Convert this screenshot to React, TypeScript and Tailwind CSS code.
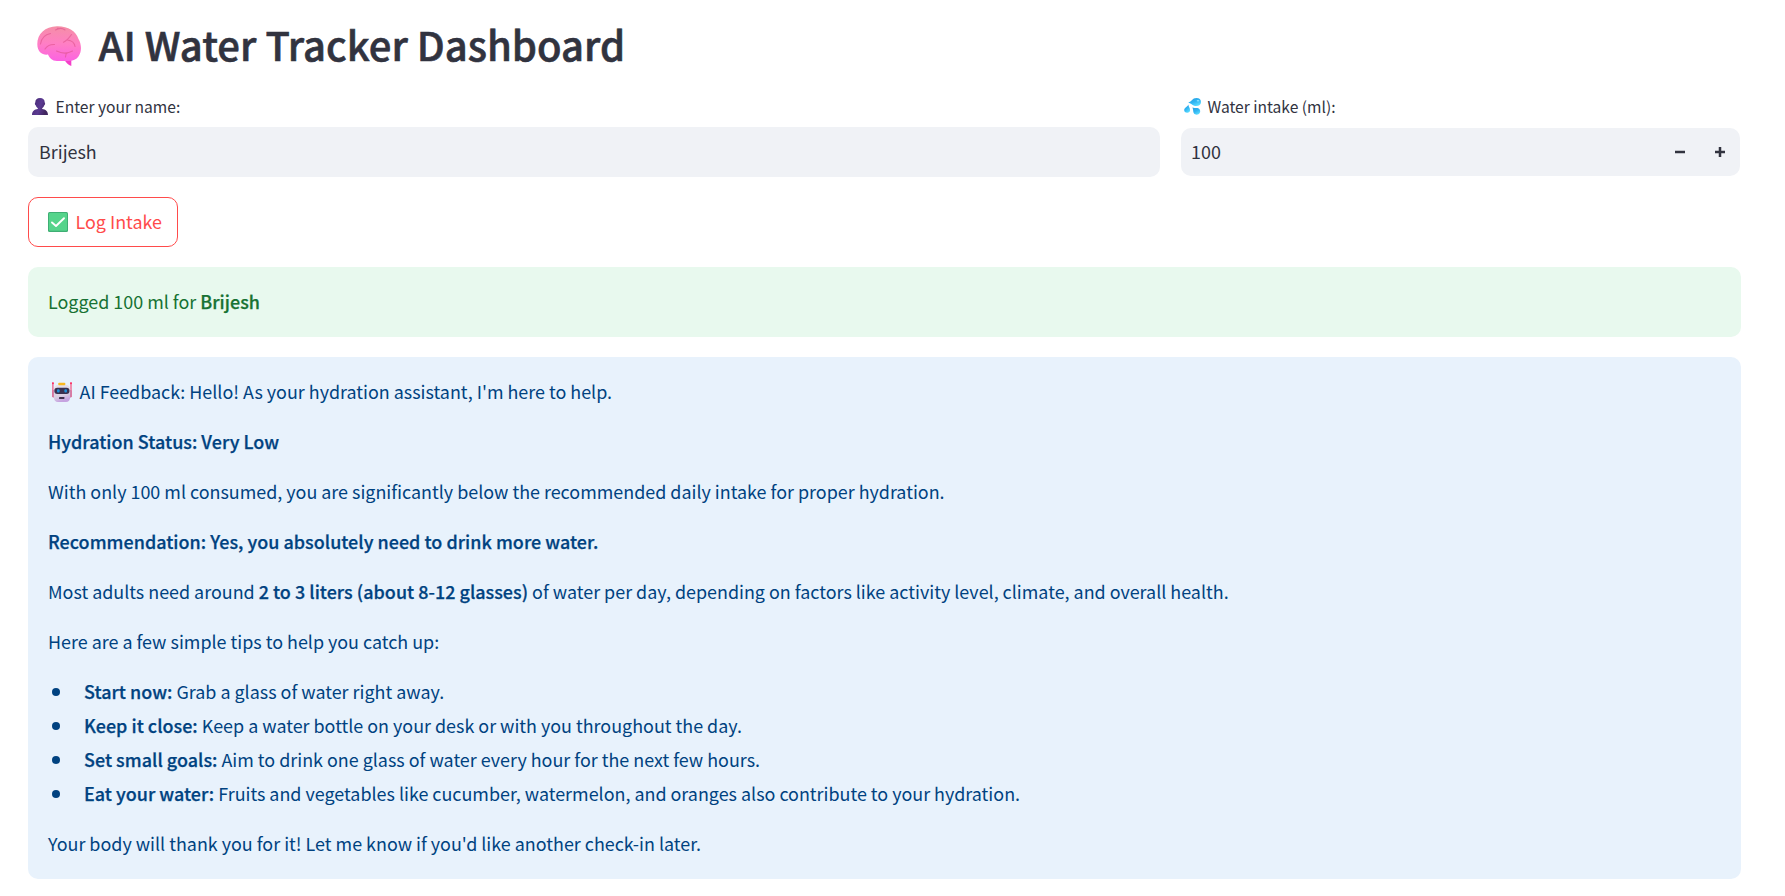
import type { ReactNode } from "react";

const BrainIcon = () => (
  <svg className="block h-10 w-11 shrink-0" viewBox="0 0 44 40" fill="none">
    <defs>
      <linearGradient id="brain" x1="0.5" y1="0" x2="0.45" y2="1">
        <stop offset="0" stopColor="#f58fa6" />
        <stop offset="0.5" stopColor="#ff7fc4" />
        <stop offset="1" stopColor="#fc62e2" />
      </linearGradient>
    </defs>
    <path d="M27 33 L34.3 34 V40 C31 38.8 29 37 27 33Z" fill="#f43fc8" />
    <path
      d="M0.3 18 C0.3 8 8 0.3 20 0.2 C31 0 39 5 41.5 13 C44.5 18 45 25 41.8 30 C39.5 34 35 35 30 35 H20 C15 35 12.5 32 11 28.5 C6 29.3 0.3 26.5 0.3 18Z"
      fill="url(#brain)"
    />
    <g stroke="#e0558f" strokeOpacity="0.65" strokeWidth="1.1" strokeLinecap="round">
      <path d="M3.5 18 C4.5 12 7.5 8.5 13.5 7.5" />
      <path d="M8 23 C10.5 19 13.5 18.3 17.5 18.5" />
      <path d="M18.5 4 C22 1.8 25 1.8 28 4 M22.5 2.6 L20.5 2.2" />
      <path d="M34.5 8.5 C31.5 12.8 30 14.5 26.5 16.2 M30.5 14 C35 14.5 37.5 17 38 20.5" />
      <path d="M19.5 25 C25 27.7 31 27.5 35.5 25 M30.5 26.8 C29 27.5 28.5 29 28.5 31" />
    </g>
  </svg>
);

const PersonIcon = () => (
  <svg className="block h-[17px] w-4 shrink-0" viewBox="0 0 16 17">
    <defs>
      <linearGradient id="person" x1="0" y1="0" x2="1" y2="0.4">
        <stop offset="0" stopColor="#44286e" />
        <stop offset="0.6" stopColor="#5b3a92" />
        <stop offset="1" stopColor="#41265f" />
      </linearGradient>
    </defs>
    <path
      d="M8 0 C11 0 12.8 1.6 12.7 4.5 C13.4 5 13.2 6.8 12.3 7.2 C11.9 8.7 11 9.6 10.2 10.1 V11 C13.5 11.5 16 13.2 16 17 H0 C0 13.2 2.5 11.5 5.8 11 V10.1 C5 9.6 4.1 8.7 3.7 7.2 C2.8 6.8 2.6 5 3.3 4.5 C3.2 1.6 5 0 8 0Z"
      fill="url(#person)"
    />
  </svg>
);

const DropsIcon = () => (
  <svg className="block h-[17px] w-[17px] shrink-0" viewBox="0 0 17 17">
    <defs>
      <linearGradient id="drops" x1="0" y1="0" x2="0.6" y2="1">
        <stop offset="0" stopColor="#2b9fe0" />
        <stop offset="0.55" stopColor="#2fb4f2" />
        <stop offset="1" stopColor="#5cdcff" />
      </linearGradient>
    </defs>
    <g fill="url(#drops)">
      <path d="M4.2 4.5 C8 3.8 8 0.1 12.5 0.1 C15.3 0.1 17 1.7 17 4 C17 6.6 15 8.1 12.3 8.1 C9 8.1 7.5 5.5 4.2 4.5Z" />
      <path d="M4.4 6.4 C4.4 8.6 6.1 9.6 6.1 12 C6.1 13.7 4.9 14.8 3.2 14.8 C1.4 14.8 0.2 13.7 0.2 12 C0.2 9.5 3.3 9 4.4 6.4Z" />
      <path d="M8.4 9.5 C10.5 10.6 12.5 9.2 14.7 10.4 C16.3 11.4 16.6 13.5 15.7 15.1 C14.7 16.8 12.6 17.2 11 16.3 C8.6 15 9.7 12.2 8.4 9.5Z" />
    </g>
    <ellipse cx="14" cy="2.7" rx="1.3" ry="0.8" fill="#8fe4ff" />
  </svg>
);

const CheckIcon = () => (
  <svg className="block h-5 w-5 shrink-0" viewBox="0 0 20 20">
    <rect width="20" height="20" rx="1.5" fill="#3fae74" />
    <rect x="1" y="1" width="18" height="17.8" rx="1" fill="#55d48b" />
    <path d="M4 10.5 L8 14 L16 6.2" fill="none" stroke="#fff" strokeWidth="1.9" strokeLinecap="round" strokeLinejoin="round" />
  </svg>
);

const RobotIcon = () => (
  <svg className="mt-0.5 block h-5 w-5 shrink-0" viewBox="0 0 20 20">
    <defs>
      <linearGradient id="robot" x1="0" y1="0" x2="0.3" y2="1">
        <stop offset="0" stopColor="#e9e4ec" />
        <stop offset="0.7" stopColor="#d9cfe2" />
        <stop offset="1" stopColor="#c6a3e0" />
      </linearGradient>
    </defs>
    <path d="M0.9 0.5 V15 M19 0.5 V15" stroke="#f0507c" strokeWidth="1.2" />
    <circle cx="0.9" cy="1.2" r="1" fill="#ff2d62" />
    <circle cx="19" cy="1.2" r="1" fill="#ff2d62" />
    <rect x="0.4" y="8" width="3" height="7.5" rx="1" fill="#cf6d9a" />
    <rect x="16.6" y="8" width="3" height="7.5" rx="1" fill="#cf6d9a" />
    <path d="M5 3 H15 C17.5 3.5 18.2 6 18.2 9 V15 C18.2 18 16.5 20 14 20 H6 C3.5 20 1.8 18 1.8 15 V9 C1.8 6 2.5 3.5 5 3Z" fill="url(#robot)" />
    <rect x="6.2" y="0.8" width="7.2" height="2.4" rx="1" fill="#f9b820" />
    <rect x="2.3" y="5.8" width="15.2" height="6.2" rx="3" fill="#3a3150" />
    <rect x="5" y="7.2" width="2.6" height="3.4" rx="1" fill="#1f8fd6" />
    <rect x="12.4" y="7.2" width="2.6" height="3.4" rx="1" fill="#1f8fd6" />
    <rect x="7" y="15" width="5.4" height="1.9" rx="0.4" fill="#40334f" />
  </svg>
);

const B = ({ children }: { children: ReactNode }) => (
  <strong className="font-medium tracking-[0.04px] [-webkit-text-stroke:0.25px_currentColor]">{children}</strong>
);

const tips = [
  { title: "Start now:", text: "Grab a glass of water right away." },
  { title: "Keep it close:", text: "Keep a water bottle on your desk or with you throughout the day." },
  { title: "Set small goals:", text: "Aim to drink one glass of water every hour for the next few hours." },
  {
    title: "Eat your water:",
    text: "Fruits and vegetables like cucumber, watermelon, and oranges also contribute to your hydration.",
  },
];

export default function App() {
  return (
    <main className="h-[896px] w-[1785px] overflow-hidden bg-white pl-7 font-['Noto_Sans_CJK_SC','Noto_Sans',sans-serif] text-[17.92px] leading-[30px] text-[#31333f]">
      <h1 className="flex h-[92px] items-center pl-[9px] text-[40px] leading-[52px] font-medium">
        <BrainIcon />
        <span className="ml-[17.5px] pb-1 tracking-[0.01px] [-webkit-text-stroke:0.6px_currentColor]">
          AI Water Tracker Dashboard
        </span>
      </h1>

      <div className="flex gap-[21px]">
        <div className="w-[1132px]">
          <label className="flex h-[35px] items-center pb-[6px] pl-1 text-[15.6px] leading-[27px]">
            <PersonIcon />
            <span className="ml-[7.5px]">Enter your name:</span>
          </label>
          <div className="flex h-[50px] items-center rounded-[10px] bg-[#f0f2f6] pb-0.5 pl-[11px]">Brijesh</div>
        </div>
        <div className="w-[560px]">
          <label className="flex h-[35px] items-center pb-[6px] pl-[3px] text-[15.6px] leading-[27px]">
            <DropsIcon />
            <span className="ml-[6.5px]">Water intake (ml):</span>
          </label>
          <div className="mt-px flex h-12 w-[559px] items-center rounded-[10px] bg-[#f0f2f6] pr-[15px] pl-[10px]">
            <span className="flex-1 pb-0.5">100</span>
            <svg className="mr-[30px] h-[10px] w-[10px]" viewBox="0 0 10 10">
              <path d="M0 5H10" stroke="#31333f" strokeWidth="2.5" />
            </svg>
            <svg className="h-[10px] w-[10px]" viewBox="0 0 10 10">
              <path d="M0 5H10M5 0V10" stroke="#31333f" strokeWidth="2.5" />
            </svg>
          </div>
        </div>
      </div>

      <button className="mt-5 flex h-[50px] w-[150px] items-center rounded-[10px] border border-[#ff4b4b] pl-[19px] whitespace-nowrap text-[#ff4b4b]">
        <CheckIcon />
        <span className="ml-[7.5px] pb-0.5">Log Intake</span>
      </button>

      <section className="mt-5 h-[70px] w-[1713px] rounded-[10px] bg-[#e8f9ee] px-5 pt-[19px] text-[#177233]">
        <p>
          Logged 100 ml for <B>Brijesh</B>
        </p>
      </section>

      <section className="mt-5 flex h-[522px] w-[1713px] flex-col gap-5 rounded-[10px] bg-[#e8f2fc] px-5 pt-[19px] text-[#004280]">
        <p className="flex items-center pl-1">
          <RobotIcon />
          <span className="ml-[7.5px]">AI Feedback: Hello! As your hydration assistant, I'm here to help.</span>
        </p>
        <p>
          <B>Hydration Status: Very Low</B>
        </p>
        <p>With only 100 ml consumed, you are significantly below the recommended daily intake for proper hydration.</p>
        <p>
          <B>Recommendation: Yes, you absolutely need to drink more water.</B>
        </p>
        <p>
          Most adults need around <B>2 to 3 liters (about 8-12 glasses)</B> of water per day, depending on factors like
          activity level, climate, and overall health.
        </p>
        <p>Here are a few simple tips to help you catch up:</p>
        <ul className="flex flex-col gap-1">
          {tips.map((tip) => (
            <li key={tip.title} className="flex items-center pl-1">
              <span className="mt-0.5 mr-[24.5px] h-[7.5px] w-[7.5px] rounded-full bg-[#004280]" />
              <span>
                <B>{tip.title}</B> {tip.text}
              </span>
            </li>
          ))}
        </ul>
        <p>Your body will thank you for it! Let me know if you'd like another check-in later.</p>
      </section>
    </main>
  );
}
